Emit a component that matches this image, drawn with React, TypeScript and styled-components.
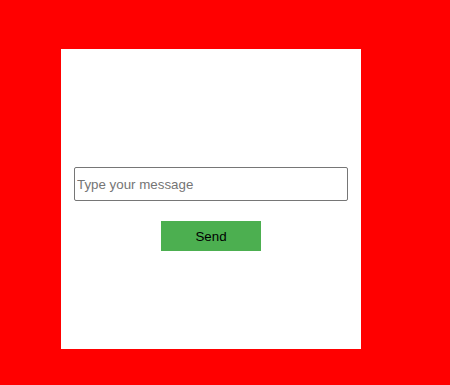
import React from "react";
import styled, { createGlobalStyle } from "styled-components";

const Global = createGlobalStyle`
  html, body { margin: 0; padding: 0; background: #ff0000; }
  body { font-family: "Liberation Sans", Arial, sans-serif; }
`;

const Page = styled.div`
  width: 450px;
  height: 385px;
  background: #ff0000;
  padding: 49px 0 0 61px;
  box-sizing: border-box;
`;

const Card = styled.div`
  width: 300px;
  height: 300px;
  background: #ffffff;
  box-sizing: border-box;
  padding: 118px 13px 0 13px;
  display: flex;
  flex-direction: column;
  align-items: center;
`;

const Input = styled.input`
  width: 274px;
  height: 34px;
  box-sizing: border-box;
  border: 1px solid #767676;
  border-radius: 2px;
  padding: 0 2px;
  font-family: "Liberation Sans", Arial, sans-serif;
  font-size: 13.333px;
  color: #000;
  outline: none;
  &::placeholder { color: #757575; }
`;

const SendButton = styled.button`
  margin-top: 20px;
  width: 100px;
  height: 30px;
  border: none;
  background: #4caf50;
  color: #000;
  font-family: "Liberation Sans", Arial, sans-serif;
  font-size: 13.333px;
  cursor: pointer;
`;

export default function App() {
  return (
    <>
      <Global />
      <Page>
        <Card>
          <Input placeholder="Type your message" />
          <SendButton>Send</SendButton>
        </Card>
      </Page>
    </>
  );
}
